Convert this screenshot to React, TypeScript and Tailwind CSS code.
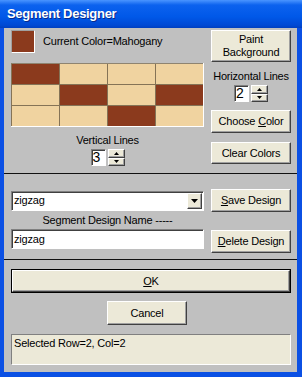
const raised =
  "bg-[#ece9d8] border border-t-white border-l-white border-b-[#404040] border-r-[#404040] shadow-[inset_-1px_-1px_0_#a0a0a0]";
const sunken =
  "border border-t-[#808080] border-l-[#808080] border-b-white border-r-white shadow-[inset_1px_1px_0_#404040]";

function Tri({ up, w, h }: { up?: boolean; w: number; h: number }) {
  const pts = up ? `0,${h} ${w},${h} ${w / 2},0` : `0,0 ${w},0 ${w / 2},${h}`;
  return (
    <svg width={w} height={h} viewBox={`0 0 ${w} ${h}`}>
      <polygon points={pts} fill="#000" />
    </svg>
  );
}

function Btn({ className, children }: { className: string; children: React.ReactNode }) {
  return (
    <div className={`${raised} flex items-center justify-center text-center leading-[13px] ${className}`}>
      {children}
    </div>
  );
}

function Spinner({ value }: { value: string }) {
  return (
    <div className="flex h-[17px] gap-[2px]">
      <div className={`w-[15px] bg-white ${sunken} text-[14px] leading-[14px] pl-[1px] tracking-normal`}>{value}</div>
      <div className="w-[17px] flex flex-col">
        <div className={`${raised} flex-1 flex items-center justify-center`}>
          <Tri up w={5} h={3} />
        </div>
        <div className={`${raised} flex-1 flex items-center justify-center`}>
          <Tri w={5} h={3} />
        </div>
      </div>
    </div>
  );
}

const cells = [
  [1, 0, 0, 0],
  [0, 1, 0, 1],
  [0, 0, 1, 0],
];

export default function App() {
  return (
    <div className="w-[302px] h-[377px] bg-[#0b50e4] flex flex-col font-['Liberation_Sans',Arial,sans-serif] text-[11px] tracking-[-0.2px] text-black select-none">
      <div className="h-[28px] shrink-0 flex items-center pl-[7px] bg-[linear-gradient(to_bottom,#4a95ff,#0c62ee_18%,#0058e8_60%,#0049d4_90%,#003fbf)]">
        <span className="text-white font-bold text-[13px] tracking-[-0.3px] [text-shadow:1px_1px_0_#0a2a8a]">
          Segment Designer
        </span>
      </div>
      <div className="flex-1 flex pl-[4px] pr-[5px] pb-[5px]">
        <div className="flex-1 bg-[#c0c0c0] flex flex-col">
          {/* top section */}
          <div className="flex pl-[7px] pt-[2px] h-[145px]">
            <div className="w-[193px] flex flex-col">
              <div className="flex items-center h-[23px]">
                <div className="w-[24px] h-[23px] bg-[#8b3a1d] border border-t-[#a0a0a0] border-l-[#a0a0a0] border-b-white border-r-white" />
                <span className="ml-[8px]">Current Color=Mahogany</span>
              </div>
              <div className="mt-[10px] w-[193px] border-b border-r border-b-white border-r-white">
                <div className="grid grid-cols-[repeat(4,47px)] grid-rows-[repeat(3,20px)] gap-px bg-[#857356] border-t border-l border-t-[#8f8470] border-l-[#857356]">
                  {cells.flat().map((c, i) => (
                    <div key={i} className={c ? "bg-[#8b3a1d]" : "bg-[#f0d3a0]"} />
                  ))}
                </div>
              </div>
              <div className="mt-[7px] text-center leading-[13px]">Vertical Lines</div>
              <div className="mt-[2px] flex justify-center">
                <Spinner value="3" />
              </div>
            </div>
            <div className="w-[80px] ml-[7px] flex flex-col">
              <Btn className="h-[32px]">
                Paint
                <br />
                Background
              </Btn>
              <div className="mt-[8px] text-center leading-[13px]">Horizontal Lines</div>
              <div className="mt-[2px] flex justify-center">
                <Spinner value="2" />
              </div>
              <Btn className="h-[23px] mt-[8px]">
                <span>
                  Choose <span className="underline underline-offset-1">C</span>olor
                </span>
              </Btn>
              <Btn className="h-[22px] mt-[9px]">Clear Colors</Btn>
            </div>
          </div>
          <div className="h-px bg-[#111]" />

          {/* middle section */}
          <div className="pl-[7px] pt-[15px] h-[85px]">
            <div className="flex items-center h-[23px]">
              <div className={`w-[193px] h-[20px] bg-white ${sunken} flex items-center`}>
                <span className="flex-1 pl-[2px]">zigzag</span>
                <div className={`${raised} w-[15px] h-[16px] mr-[1px] flex items-center justify-center`}>
                  <Tri w={7} h={4} />
                </div>
              </div>
              <Btn className="w-[80px] h-[23px] ml-[7px]">
                <span>
                  <span className="underline underline-offset-1">S</span>ave Design
                </span>
              </Btn>
            </div>
            <div className="flex items-start">
              <div className="w-[193px] flex flex-col">
                <div className="mt-[2px] text-center leading-[13px]">Segment Design Name -----</div>
                <div className={`mt-[2px] h-[20px] bg-white ${sunken} flex items-center pl-[2px]`}>zigzag</div>
              </div>
              <Btn className="w-[80px] h-[23px] ml-[7px] mt-[18px]">
                <span>
                  <span className="underline underline-offset-1">D</span>elete Design
                </span>
              </Btn>
            </div>
          </div>
          <div className="h-px bg-[#111]" />

          {/* bottom section */}
          <div className="pl-[7px] flex flex-col">
            <div className="mt-[9px] w-[280px] h-[24px] border border-black">
              <Btn className="h-full">
                <span>
                  <span className="underline underline-offset-1">O</span>K
                </span>
              </Btn>
            </div>
            <Btn className="mt-[8px] ml-[96px] w-[80px] h-[24px]">Cancel</Btn>
            <div className="mt-[9px] w-[280px] h-[31px] bg-[#ece9d8] border border-t-[#808080] border-l-[#808080] border-b-white border-r-white pl-[2px] pt-[2px] leading-[13px]">
              Selected Row=2, Col=2
            </div>
          </div>
        </div>
      </div>
    </div>
  );
}
